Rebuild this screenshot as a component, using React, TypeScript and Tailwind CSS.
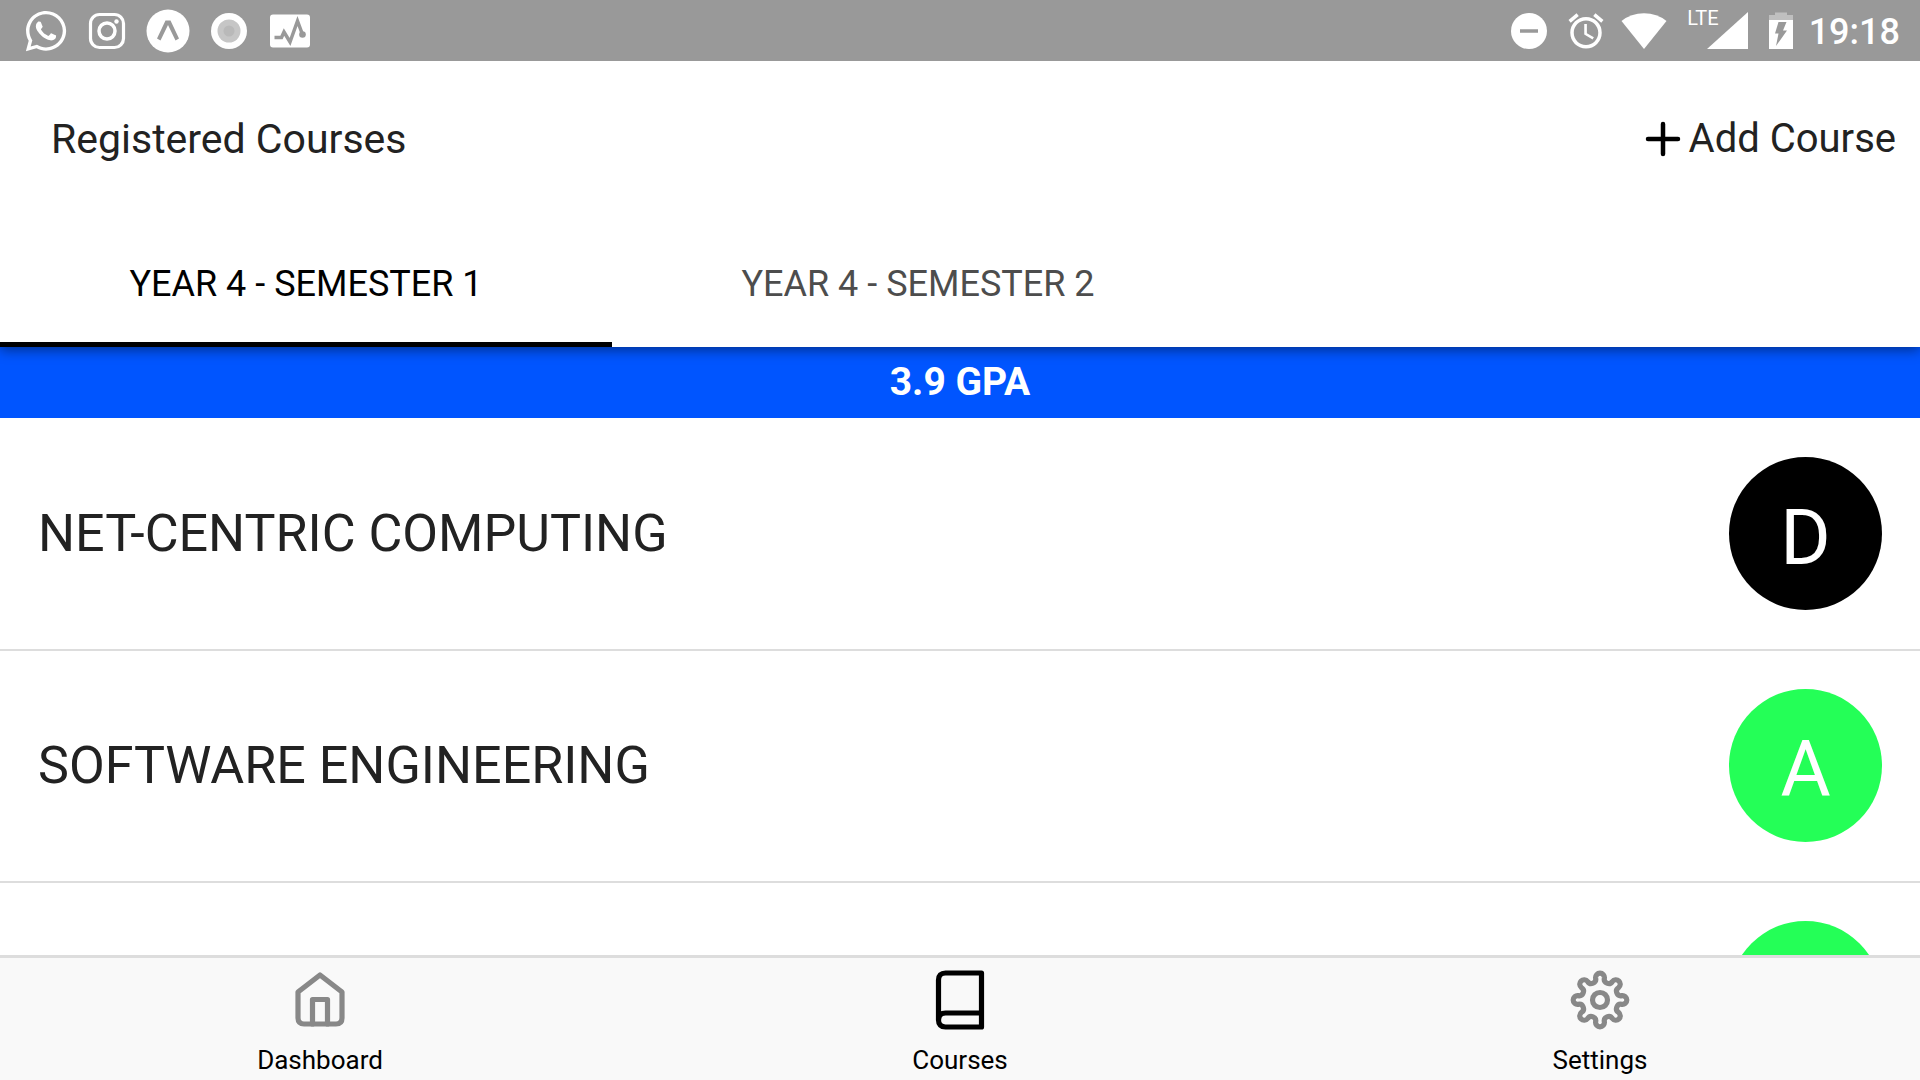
import type { ReactNode } from "react";
import { FaWhatsapp } from "react-icons/fa";
import { MdAlarm } from "react-icons/md";

type Course = { name?: string; grade?: string; color: string };

const courses: Course[] = [
  { name: "NET-CENTRIC COMPUTING", grade: "D", color: "bg-black" },
  { name: "SOFTWARE ENGINEERING", grade: "A", color: "bg-[#24ff57]" },
  { color: "bg-[#24ff57]" },
];

// Eight rounded teeth joined by rounded valleys, as alternating arcs.
function gearPath() {
  const point = (r: number, deg: number) => {
    const a = (deg * Math.PI) / 180;
    return [30 + r * Math.cos(a), 30 + r * Math.sin(a)];
  };
  let d = "";
  for (let i = 0; i < 8; i++) {
    const tooth = point(22.6, i * 45);
    const before = point(22.8, i * 45 - 22.5);
    const after = point(22.8, i * 45 + 22.5);
    const start = [(tooth[0] + before[0]) / 2, (tooth[1] + before[1]) / 2];
    const end = [(tooth[0] + after[0]) / 2, (tooth[1] + after[1]) / 2];
    d += i === 0 ? `M${start[0]} ${start[1]}` : `A4.4 4.4 0 0 0 ${start[0]} ${start[1]}`;
    d += `A4.4 4.4 0 1 1 ${end[0]} ${end[1]}`;
    if (i === 7) {
      const first = point(22.6, 0);
      const valley = point(22.8, -22.5);
      d += `A4.4 4.4 0 0 0 ${(first[0] + valley[0]) / 2} ${(first[1] + valley[1]) / 2}Z`;
    }
  }
  return d;
}

const stroke = {
  fill: "none",
  stroke: "currentColor",
  strokeWidth: 5.2,
  strokeLinejoin: "round" as const,
  strokeLinecap: "round" as const,
};

function HomeIcon() {
  return (
    <svg className="size-15" viewBox="0 0 60 60" {...stroke} aria-hidden="true">
      <path d="M8 22 30 5 52 22v26q0 6-6 6H14q-6 0-6-6Z" />
      <path d="M22.500 54V29.500h15V54" />
    </svg>
  );
}

function BookIcon() {
  return (
    <svg className="size-15" viewBox="0 0 60 60" {...stroke} aria-hidden="true">
      <path d="M8.500 50V10q0-7 7-7h36v54h-36q-7 0-7-7t7-7h36" />
    </svg>
  );
}

function GearIcon() {
  return (
    <svg className="size-15" viewBox="0 0 60 60" {...stroke} aria-hidden="true">
      <path d={gearPath()} />
      <circle cx="30" cy="30" r="7.500" />
    </svg>
  );
}

function StatusBar() {
  return (
    <div className="flex h-[61px] shrink-0 items-center justify-between bg-[#999] pr-5 pl-[15px] text-white">
      <div className="grid grid-cols-[repeat(5,61px)] items-center justify-items-center">
        <FaWhatsapp className="size-[46px]" aria-label="WhatsApp" />
        <svg className="size-10" viewBox="0 0 40 40" fill="none" stroke="currentColor" aria-hidden="true">
          <rect x="3.500" y="3.500" width="33" height="33" rx="9" strokeWidth="3.200" />
          <circle cx="20" cy="20" r="8" strokeWidth="3.500" />
          <circle cx="29.500" cy="10.500" r="2.200" fill="currentColor" stroke="none" />
        </svg>
        <svg className="size-11" viewBox="0 0 44 44" aria-hidden="true">
          <circle cx="22" cy="22" r="21.500" fill="#fff" />
          <path d="M19.500 11.500h5l8.500 18-3.500 2L22 16l-7.500 15.500-3.500-2Z" fill="#999" />
        </svg>
        <svg className="size-10" viewBox="0 0 40 40" aria-hidden="true">
          <circle cx="20" cy="20" r="18" fill="#fff" />
          <circle cx="20" cy="20" r="11.500" fill="#c6c6c6" />
          <circle cx="20" cy="20" r="5.500" fill="#b9b9b9" />
        </svg>
        <svg className="h-10 w-[42px]" viewBox="0 0 42 40" aria-hidden="true">
          <rect x="1" y="3.500" width="40" height="33" rx="3" fill="#fff" />
          <path d="M5.500 26.500h7l2.500-5.500 6 10 7.500-21 5 13.500" fill="none" stroke="#999" strokeWidth="3.500" />
          <circle cx="33.500" cy="23.500" r="3.300" fill="#999" />
        </svg>
      </div>
      <div className="flex items-center">
        <svg className="size-10" viewBox="0 0 40 40" aria-hidden="true">
          <circle cx="20" cy="20" r="18" fill="#fff" />
          <path d="M11 20h18" stroke="#999" strokeWidth="3.500" />
        </svg>
        <MdAlarm className="ml-4 size-[42px]" aria-hidden="true" />
        <svg className="ml-3.5 h-10 w-[46px]" viewBox="0 0 46 40" fill="currentColor" aria-hidden="true">
          <path d="M.5 10Q10 2.200 23 2.200T45.500 10L23 38Z" />
        </svg>
        <div className="ml-5 flex h-[38px] items-start">
          <span className="text-xl leading-3">LTE</span>
          <svg className="-ml-3 size-[42px]" viewBox="0 0 42 42" fill="currentColor" aria-hidden="true">
            <path d="M41 0v37H0Z" />
          </svg>
        </div>
        <svg className="ml-5 h-[38px] w-6" viewBox="0 0 24 38" aria-hidden="true">
          <path d="M0 3h6V.5h12V3h6v6H0Z" fill="#bfbfbf" />
          <path d="M0 8h24v29H0Z" fill="#fff" />
          <path d="M9.500 10h8l-3.500 8.500h4L7 34l2.500-12.500H6Z" fill="#999" />
        </svg>
        <time className="ml-4 pt-0.5 text-[36px] leading-10 font-medium">19:18</time>
      </div>
    </div>
  );
}

function NavItem({ label, icon, active }: { label: string; icon: ReactNode; active?: boolean }) {
  return (
    <button
      type="button"
      aria-current={active ? "page" : undefined}
      className="flex flex-1 flex-col items-center gap-3.5 pt-3 pb-1 text-black"
    >
      <span className={active ? "text-black" : "text-[#888]"}>{icon}</span>
      <span className="text-[26px] leading-8">{label}</span>
    </button>
  );
}

export default function App() {
  return (
    <div className="flex h-screen flex-col bg-white font-['Roboto',sans-serif]">
      <div className="relative z-10 shrink-0 bg-white shadow-[0_3px_12px_rgba(0,0,0,0.45)]">
        <StatusBar />
        <header className="flex h-[156px] items-center justify-between pr-6 pl-[51px] text-[#222]">
          <h1 className="text-[41px] leading-12">Registered Courses</h1>
          <button type="button" className="flex items-center gap-2 text-[40px] leading-12">
            <svg className="size-9" viewBox="0 0 36 36" stroke="#000" strokeWidth="4.500" strokeLinecap="round" aria-hidden="true">
              <path d="M18 3v30M3 18h30" />
            </svg>
            Add Course
          </button>
        </header>
        <div role="tablist" className="flex h-[130px] text-[36px]">
          <button type="button" role="tab" aria-selected="true" className="w-[612px] border-b-5 border-black pt-2 text-black">
            YEAR 4 - SEMESTER 1
          </button>
          <button type="button" role="tab" aria-selected="false" className="w-[612px] border-b-5 border-transparent pt-2 text-[#4d4d4d]">
            YEAR 4 - SEMESTER 2
          </button>
        </div>
      </div>
      <p className="flex h-[71px] shrink-0 items-center justify-center bg-[#0055ff] text-[39px] font-bold text-white">3.9 GPA</p>
      <main className="min-h-0 flex-1 overflow-hidden pt-px">
        <ul>
          {courses.map((course, i) => (
            <li key={i} className="flex items-center justify-between border-b-2 border-[#ddd] px-[38px] pt-[38px] pb-[39px]">
              <span className="text-[52px] leading-16 text-[#222]">{course.name}</span>
              <span className={`flex size-[153px] items-center justify-center rounded-full pt-2.5 text-[77px] text-white ${course.color}`}>
                {course.grade}
              </span>
            </li>
          ))}
        </ul>
      </main>
      <nav className="flex shrink-0 border-t-3 border-[#ddd] bg-[#f9f9f9]">
        <NavItem label="Dashboard" icon={<HomeIcon />} />
        <NavItem label="Courses" icon={<BookIcon />} active />
        <NavItem label="Settings" icon={<GearIcon />} />
      </nav>
    </div>
  );
}
